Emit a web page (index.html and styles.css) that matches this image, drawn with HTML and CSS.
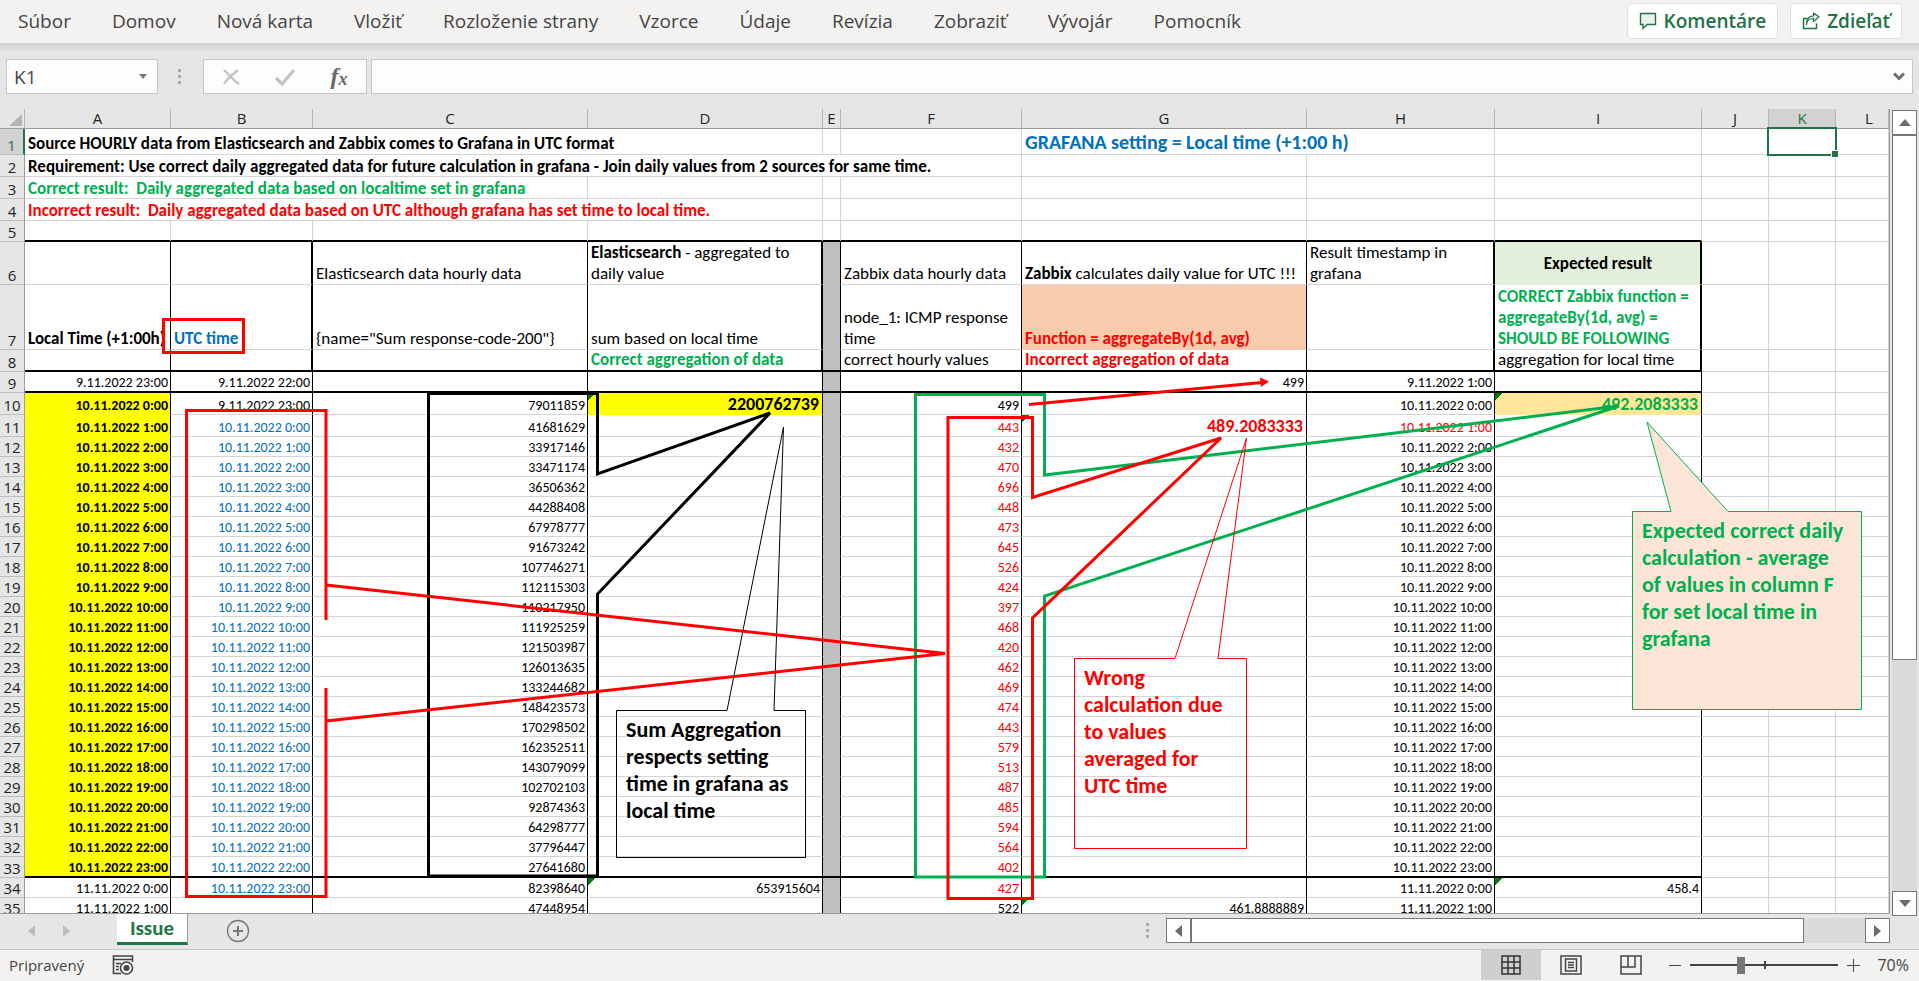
FILE: index.html
```html
<!DOCTYPE html>
<html lang="sk">
<head>
<meta charset="utf-8">
<title>Issue</title>
<link rel="stylesheet" href="styles.css">
</head>
<body>
<div class="app">
<header class="ribbon">
<nav class="tabs">
<button>Súbor</button><button>Domov</button><button>Nová karta</button><button>Vložiť</button><button>Rozloženie strany</button><button>Vzorce</button><button>Údaje</button><button>Revízia</button><button>Zobraziť</button><button>Vývojár</button><button>Pomocník</button>
</nav>
<div class="actions">
<button class="action"><svg width="18" height="18" viewBox="0 0 18 18"><path d="M1.5 1.5h15v11H8l-4 4v-4H1.5z" fill="#e9f3ed" stroke="#217346" stroke-width="1.4"/></svg>Komentáre</button>
<button class="action"><svg width="18" height="18" viewBox="0 0 18 18"><path d="M5.5 6.500H1.500V16.500H14.500V11.500" fill="none" stroke="#217346" stroke-width="1.500"/><path d="M4.500 12.500C5 8.500 7.500 6.500 11.500 6.500V9.500L17 4.800L11.500 1V3.800C7 4 4.500 7.500 4.500 12.500z" fill="#e9f3ed" stroke="#217346" stroke-width="1.200" stroke-linejoin="round"/></svg>Zdieľať</button>
</div>
</header>
<section class="formula">
<div class="namebox"><input type="text" value="K1" aria-label="Pole názvov"><button aria-label="Zoznam názvov"><svg width="8" height="5" viewBox="0 0 8 5"><path d="M0 0h8L4 5z" fill="#777"/></svg></button></div>
<svg class="grip" width="4" height="16" viewBox="0 0 4 16"><path d="M0 0h3v3H0zM0 6h3v3H0zM0 12h3v3H0z" fill="#a9a9a9"/></svg>
<div class="fxgroup">
<button aria-label="Zrušiť"><svg width="18" height="18" viewBox="0 0 18 18"><path d="M2 2C7 7 11 12 17 16M16 2C11 6 5 11 2 16" fill="none" stroke="#c3c3c3" stroke-width="2.400"/></svg></button>
<button aria-label="Zadať"><svg width="20" height="18" viewBox="0 0 20 18"><path d="M1 10L7 16L19 2" fill="none" stroke="#c3c3c3" stroke-width="3.200"/></svg></button>
<button class="fx" aria-label="Vložiť funkciu">f<span>x</span></button>
</div>
<div class="formulabox"><input type="text" aria-label="Riadok vzorcov"><button aria-label="Rozbaliť"><svg width="12" height="9" viewBox="0 0 12 9"><path d="M1 1.500L6 6.500L11 1.500" fill="none" stroke="#6b6b6b" stroke-width="3"/></svg></button></div>
</section>
<main class="work">
<div class="sheet">
<table class="grid">
<colgroup><col class="w-n"><col class="w-a"><col class="w-b"><col class="w-c"><col class="w-d"><col class="w-e"><col class="w-f"><col class="w-g"><col class="w-h"><col class="w-i"><col class="w-j"><col class="w-j"><col></colgroup>
<thead><tr class="cols"><th><svg class="corner" width="13" height="12" viewBox="0 0 13 12"><path d="M13 0v12H0z" fill="#b4b4b4"/></svg></th><th>A</th><th>B</th><th>C</th><th>D</th><th>E</th><th>F</th><th>G</th><th>H</th><th>I</th><th>J</th><th class="on">K</th><th>L</th></tr></thead>
<tbody class="notes">
<tr class="h26"><th class="on">1</th><td colspan="4">Source HOURLY data from Elasticsearch and Zabbix comes to Grafana in UTC format</td><td></td><td></td><td colspan="2" class="blue big">GRAFANA setting = Local time (+1:00 h)</td><td></td><td></td><td></td><td></td></tr>
<tr class="h22"><th>2</th><td colspan="6">Requirement: Use correct daily aggregated data for future calculation in grafana - Join daily values from 2 sources for same time.</td><td></td><td></td><td></td><td></td><td></td><td></td></tr>
<tr class="h22"><th>3</th><td colspan="3" class="green">Correct result:&nbsp; Daily aggregated data based on localtime set in grafana</td><td></td><td></td><td></td><td></td><td></td><td></td><td></td><td></td><td></td></tr>
<tr class="h22"><th>4</th><td colspan="4" class="red">Incorrect result:&nbsp; Daily aggregated data based on UTC although grafana has set time to local time.</td><td></td><td></td><td></td><td></td><td></td><td></td><td></td><td></td></tr>
<tr class="h21 thick"><th>5</th><td></td><td></td><td></td><td></td><td></td><td></td><td></td><td></td><td></td><td></td><td></td><td></td></tr>
</tbody>
<tbody class="body head">
<tr class="h43"><th>6</th><td></td><td></td><td>Elasticsearch data hourly data</td><td><b>Elasticsearch</b> - aggregated to daily value</td><td></td><td>Zabbix data hourly data</td><td class="line"><b>Zabbix</b> calculates daily value for UTC !!!</td><td class="top">Result timestamp in grafana</td><td class="expected">Expected result</td><td></td><td></td><td></td></tr>
<tr class="h65"><th>7</th><td class="line"><b>Local Time (+1:00h)</b></td><td class="blue"><b>UTC time</b></td><td>{name="Sum response-code-200"}</td><td>sum based on local time</td><td></td><td>node_1: ICMP response time</td><td class="red peach"><b>Function = aggregateBy(1d, avg)</b></td><td></td><td class="green line"><b>CORRECT Zabbix function =<br>aggregateBy(1d, avg) =<br>SHOULD BE FOLLOWING</b></td><td></td><td></td><td></td></tr>
<tr class="h22 thick"><th>8</th><td></td><td></td><td></td><td class="green"><b>Correct aggregation of data</b></td><td></td><td>correct hourly values</td><td class="red"><b>Incorrect aggregation of data</b></td><td></td><td class="line">aggregation for local time</td><td></td><td></td><td></td></tr>
</tbody>
<tbody class="body data">
<tr class="h21 thick"><th>9</th><td>9.11.2022 23:00</td><td>9.11.2022 22:00</td><td></td><td></td><td></td><td></td><td>499</td><td>9.11.2022 1:00</td><td></td><td></td><td></td><td></td></tr>
</tbody>
<tbody class="body data day">
<tr class="h22"><th>10</th><td>10.11.2022 0:00</td><td class="black">9.11.2022 23:00</td><td>79011859</td><td class="total yellow flag">2200762739</td><td></td><td class="black">499</td><td></td><td>10.11.2022 0:00</td><td class="total green gold flag">492.2083333</td><td></td><td></td><td></td></tr>
<tr class="h22"><th>11</th><td>10.11.2022 1:00</td><td>10.11.2022 0:00</td><td>41681629</td><td></td><td></td><td>443</td><td class="total red flag">489.2083333</td><td class="red">10.11.2022 1:00</td><td></td><td></td><td></td><td></td></tr>
<tr><th>12</th><td>10.11.2022 2:00</td><td>10.11.2022 1:00</td><td>33917146</td><td></td><td></td><td>432</td><td></td><td>10.11.2022 2:00</td><td></td><td></td><td></td><td></td></tr>
<tr><th>13</th><td>10.11.2022 3:00</td><td>10.11.2022 2:00</td><td>33471174</td><td></td><td></td><td>470</td><td></td><td>10.11.2022 3:00</td><td></td><td></td><td></td><td></td></tr>
<tr><th>14</th><td>10.11.2022 4:00</td><td>10.11.2022 3:00</td><td>36506362</td><td></td><td></td><td>696</td><td></td><td>10.11.2022 4:00</td><td></td><td></td><td></td><td></td></tr>
<tr><th>15</th><td>10.11.2022 5:00</td><td>10.11.2022 4:00</td><td>44288408</td><td></td><td></td><td>448</td><td></td><td>10.11.2022 5:00</td><td></td><td></td><td></td><td></td></tr>
<tr><th>16</th><td>10.11.2022 6:00</td><td>10.11.2022 5:00</td><td>67978777</td><td></td><td></td><td>473</td><td></td><td>10.11.2022 6:00</td><td></td><td></td><td></td><td></td></tr>
<tr><th>17</th><td>10.11.2022 7:00</td><td>10.11.2022 6:00</td><td>91673242</td><td></td><td></td><td>645</td><td></td><td>10.11.2022 7:00</td><td></td><td></td><td></td><td></td></tr>
<tr><th>18</th><td>10.11.2022 8:00</td><td>10.11.2022 7:00</td><td>107746271</td><td></td><td></td><td>526</td><td></td><td>10.11.2022 8:00</td><td></td><td></td><td></td><td></td></tr>
<tr><th>19</th><td>10.11.2022 9:00</td><td>10.11.2022 8:00</td><td>112115303</td><td></td><td></td><td>424</td><td></td><td>10.11.2022 9:00</td><td></td><td></td><td></td><td></td></tr>
<tr><th>20</th><td>10.11.2022 10:00</td><td>10.11.2022 9:00</td><td>110217950</td><td></td><td></td><td>397</td><td></td><td>10.11.2022 10:00</td><td></td><td></td><td></td><td></td></tr>
<tr><th>21</th><td>10.11.2022 11:00</td><td>10.11.2022 10:00</td><td>111925259</td><td></td><td></td><td>468</td><td></td><td>10.11.2022 11:00</td><td></td><td></td><td></td><td></td></tr>
<tr><th>22</th><td>10.11.2022 12:00</td><td>10.11.2022 11:00</td><td>121503987</td><td></td><td></td><td>420</td><td></td><td>10.11.2022 12:00</td><td></td><td></td><td></td><td></td></tr>
<tr><th>23</th><td>10.11.2022 13:00</td><td>10.11.2022 12:00</td><td>126013635</td><td></td><td></td><td>462</td><td></td><td>10.11.2022 13:00</td><td></td><td></td><td></td><td></td></tr>
<tr><th>24</th><td>10.11.2022 14:00</td><td>10.11.2022 13:00</td><td>133244682</td><td></td><td></td><td>469</td><td></td><td>10.11.2022 14:00</td><td></td><td></td><td></td><td></td></tr>
<tr><th>25</th><td>10.11.2022 15:00</td><td>10.11.2022 14:00</td><td>148423573</td><td></td><td></td><td>474</td><td></td><td>10.11.2022 15:00</td><td></td><td></td><td></td><td></td></tr>
<tr><th>26</th><td>10.11.2022 16:00</td><td>10.11.2022 15:00</td><td>170298502</td><td></td><td></td><td>443</td><td></td><td>10.11.2022 16:00</td><td></td><td></td><td></td><td></td></tr>
<tr><th>27</th><td>10.11.2022 17:00</td><td>10.11.2022 16:00</td><td>162352511</td><td></td><td></td><td>579</td><td></td><td>10.11.2022 17:00</td><td></td><td></td><td></td><td></td></tr>
<tr><th>28</th><td>10.11.2022 18:00</td><td>10.11.2022 17:00</td><td>143079099</td><td></td><td></td><td>513</td><td></td><td>10.11.2022 18:00</td><td></td><td></td><td></td><td></td></tr>
<tr><th>29</th><td>10.11.2022 19:00</td><td>10.11.2022 18:00</td><td>102702103</td><td></td><td></td><td>487</td><td></td><td>10.11.2022 19:00</td><td></td><td></td><td></td><td></td></tr>
<tr><th>30</th><td>10.11.2022 20:00</td><td>10.11.2022 19:00</td><td>92874363</td><td></td><td></td><td>485</td><td></td><td>10.11.2022 20:00</td><td></td><td></td><td></td><td></td></tr>
<tr><th>31</th><td>10.11.2022 21:00</td><td>10.11.2022 20:00</td><td>64298777</td><td></td><td></td><td>594</td><td></td><td>10.11.2022 21:00</td><td></td><td></td><td></td><td></td></tr>
<tr><th>32</th><td>10.11.2022 22:00</td><td>10.11.2022 21:00</td><td>37796447</td><td></td><td></td><td>564</td><td></td><td>10.11.2022 22:00</td><td></td><td></td><td></td><td></td></tr>
<tr class="h21 thick"><th>33</th><td>10.11.2022 23:00</td><td>10.11.2022 22:00</td><td>27641680</td><td></td><td></td><td>402</td><td></td><td>10.11.2022 23:00</td><td></td><td></td><td></td><td></td></tr>
</tbody>
<tbody class="body data">
<tr><th>34</th><td>11.11.2022 0:00</td><td class="blue">10.11.2022 23:00</td><td>82398640</td><td class="flag">653915604</td><td></td><td class="red">427</td><td></td><td>11.11.2022 0:00</td><td class="flag">458.4</td><td></td><td></td><td></td></tr>
<tr><th>35</th><td>11.11.2022 1:00</td><td></td><td>47448954</td><td></td><td></td><td>522</td><td class="flag">461.8888889</td><td>11.11.2022 1:00</td><td></td><td></td><td></td><td></td></tr>
</tbody>
</table>
<svg class="shapes" width="1889" height="805" viewBox="0 109 1889 805" fill="none" stroke-width="3">
<path d="M1632.500 511.500H1671L1647 422L1728 511.500H1861.500V709.500H1632.500z" fill="#fbe5d6" stroke="#00b050" stroke-width="1"/>
<path d="M915.500 394.500H1044.500V475L1619 406L1044.500 596V877H915.500z" stroke="#00b050"/>
<path d="M428.500 393.500H597.500V474L770 413L597.500 594V876H428.500z" stroke="#000"/>
<path d="M616.500 710.500H727L783.500 427L774 710.500H805.500V857.500H616.500z" stroke="#000" stroke-width="1"/>
<path d="M1074.500 658.500H1175L1246.500 438L1218 658.500H1246.500V848.500H1074.500z" stroke="#f00" stroke-width="1"/>
<g stroke="#f00"><path d="M163.500 319.500H243.500V352.500H163.500z"/>
<path d="M326 620V410.500H186.500V896.500H326V688M326 585L945 653.500L326 721"/>
<path d="M948 417.500H1032.500V497.500L1221 438L1032.500 618V898.500H948z"/>
<path d="M1029 404.500L1262 382.500"/></g>
<path d="M1260 377.500L1269 381.500L1261 387z" fill="#f00"/>
<path d="M1768 128H1836V155H1768z" stroke="#217346" stroke-width="2"/>
<path d="M1831.500 150.500h7v7h-7z" fill="#217346" stroke="#fff" stroke-width="1"/>
</svg>
<p class="callout sum">Sum Aggregation respects setting time in grafana as local time</p>
<p class="callout wrong">Wrong calculation due to values averaged for UTC time</p>
<p class="callout expect">Expected correct daily calculation - average of values in column F for set local time in grafana</p>
</div>
<div class="vscroll">
<button aria-label="Nahor"><svg width="12" height="7" viewBox="0 0 12 7"><path d="M6 0l6 7H0z" fill="#6b6b6b"/></svg></button>
<div class="track"><div class="thumb"></div></div>
<button aria-label="Nadol"><svg width="12" height="7" viewBox="0 0 12 7"><path d="M6 7L0 0h12z" fill="#6b6b6b"/></svg></button>
</div>
</main>
<section class="sheetbar">
<button class="move" aria-label="Predchádzajúci hárok"><svg width="7" height="12" viewBox="0 0 7 12"><path d="M7 0v12L0 6z" fill="#bdbdbd"/></svg></button>
<button class="move" aria-label="Ďalší hárok"><svg width="7" height="12" viewBox="0 0 7 12"><path d="M0 0v12L7 6z" fill="#bdbdbd"/></svg></button>
<button class="sheettab">Issue</button>
<button class="add" aria-label="Nový hárok"><svg width="24" height="24" viewBox="0 0 24 24"><circle cx="12" cy="12" r="10.500" fill="none" stroke="#777" stroke-width="1.300"/><path d="M12 7v10M7 12h10" stroke="#777" stroke-width="2"/></svg></button>
<svg class="grip end" width="4" height="16" viewBox="0 0 4 16"><path d="M0 0h3v3H0zM0 6h3v3H0zM0 12h3v3H0z" fill="#a9a9a9"/></svg>
<div class="hscroll">
<button aria-label="Doľava"><svg width="7" height="12" viewBox="0 0 7 12"><path d="M7 0v12L0 6z" fill="#6b6b6b"/></svg></button>
<div class="track"><div class="thumb"></div></div>
<button aria-label="Doprava"><svg width="7" height="12" viewBox="0 0 7 12"><path d="M0 0v12L7 6z" fill="#6b6b6b"/></svg></button>
</div>
</section>
<footer class="status">
<span>Pripravený</span>
<svg class="macro" width="22" height="20" viewBox="0 0 22 20"><path d="M9 18.500H1.500V1H20.500V7" fill="none" stroke="#444" stroke-width="1.600"/><path d="M1 4.500H21M4 8.500H9M4 11.500H7M4 14.500H7" stroke="#444" stroke-width="1.600"/><circle cx="14.500" cy="13" r="6" fill="#f3f2f1" stroke="#444" stroke-width="1.600"/><circle cx="14.500" cy="13" r="3" fill="#444"/></svg>
<div class="views">
<button class="on" aria-label="Normálne"><svg width="20" height="20" viewBox="0 0 20 20" fill="none" stroke="#333" stroke-width="1.500"><path d="M1 1h18v18H1zM7 1v18M13 1v18M1 7h18M1 13h18"/></svg></button>
<button aria-label="Rozloženie strany"><svg width="22" height="20" viewBox="0 0 22 20" fill="none" stroke="#444" stroke-width="1.500"><path d="M1 1h20v18H1zM5.500 4h11v12h-11zM8 7.500h6M8 10h6M8 12.500h6"/></svg></button>
<button aria-label="Zlomy strán"><svg width="22" height="20" viewBox="0 0 22 20" fill="none" stroke="#444" stroke-width="1.500"><path d="M1 1h20v18H1zM1 12h14V1M8 1v11"/></svg></button>
</div>
<div class="zoom">
<button aria-label="Oddialiť"><svg width="12" height="12" viewBox="0 0 12 12"><path d="M0 6.500h12" stroke="#444" stroke-width="1"/></svg></button>
<div class="slide"><input type="range" min="0" max="100" value="33" aria-label="Lupa"></div>
<button aria-label="Priblížiť"><svg width="13" height="13" viewBox="0 0 13 13"><path d="M0 6.500h13M6.500 0v13" stroke="#444" stroke-width="1"/></svg></button>
<span class="pct">70%</span>
</div>
</footer>
</div>
</body>
</html>
```
FILE: styles.css
```css
* { box-sizing: border-box; }
body { margin: 0; font-family: "Open Sans", "Noto Sans", sans-serif; color: #444; }
button { border: 0; padding: 0; margin: 0; background: none; font: inherit; color: inherit; display: flex; align-items: center; justify-content: center; }
input { font: inherit; color: inherit; border: 0; padding: 0; margin: 0; background: none; min-width: 0; outline: 0; }
svg { display: block; flex: none; }
.app { height: 100vh; display: flex; flex-direction: column; background: #e6e6e6; overflow: hidden; }

.ribbon { flex: none; height: 43px; padding: 0 17px 2px 18px; display: flex; justify-content: space-between; align-items: center; background: #f3f2f1; font-size: 19px; }
.tabs { display: flex; gap: 41px; white-space: nowrap; }
.actions { display: flex; gap: 12px; }
.action { height: 36px; padding: 0 11px; gap: 7px; background: #fff; border: 1px solid #e1dfdd; border-radius: 4px; color: #217346; font-weight: 600; }

.formula { flex: none; height: 66px; padding: 16px 6px 15px; display: flex; align-items: stretch; background: linear-gradient(#d0d0d0, #e6e6e6 9px); }
.namebox { width: 152px; display: flex; background: #fdfdfd; border: 1px solid #c6c6c6; font-size: 19px; }
.namebox input { flex: 1; padding-left: 7px; }
.namebox button { width: 28px; }
.grip { align-self: center; margin: 0 21px 0 20px; }
.fxgroup { width: 164px; margin-right: 4px; display: flex; background: #fdfdfd; border: 1px solid #c6c6c6; }
.fxgroup button { flex: 1; }
.fx { font: italic bold 24px "Liberation Serif", serif; color: #666; }
.fx span { font-size: 18px; padding-top: 5px; }
.formulabox { flex: 1; display: flex; background: #fdfdfd; border: 1px solid #c6c6c6; }
.formulabox input { flex: 1; padding: 0 8px; }
.formulabox button { width: 26px; }

.work { flex: 1; min-height: 0; display: flex; }
.sheet { flex: 1; min-width: 0; position: relative; overflow: hidden; background: #fff; border-right: 1px solid #9b9b9b; border-bottom: 1px solid #9b9b9b; }
.grid { width: 100%; table-layout: fixed; border-collapse: separate; border-spacing: 0; font-family: Carlito, Lato, sans-serif; font-size: 17px; color: #000; }
.w-n { width: 25px; } .w-a { width: 146px; } .w-b { width: 142px; } .w-c { width: 275px; } .w-d { width: 235px; } .w-e { width: 18px; }
.w-f { width: 181px; } .w-g { width: 285px; } .w-h { width: 188px; } .w-i { width: 207px; } .w-j { width: 67px; }
.grid tr { height: 20px; }
.grid .h21 { height: 21px; } .grid .h22 { height: 22px; } .grid .h26 { height: 26px; } .grid .h43 { height: 43px; } .grid .h65 { height: 65px; }
.grid th { padding: 0; background: #e6e6e6; font: 15px/18px "Open Sans", "Noto Sans", sans-serif; color: #222; border-right: 1px solid #9b9b9b; border-bottom: 1px solid #bdbdbd; vertical-align: bottom; overflow: hidden; }
.grid .cols th { padding-bottom: 1px; border-right-color: #b5b5b5; border-bottom-color: #9b9b9b; }
.grid .cols th:last-child { padding-left: 14px; }
.grid .cols .on { background: #d2d2d2; color: #217346; border-bottom-color: #217346; }
.grid tbody th.on { background: #d2d2d2; color: #217346; border-right: 2px solid #217346; }
.corner { margin: 2px 0 1px 9px; }
.grid td { padding: 0 2px 0 3px; border-right: 1px solid #d4d4d4; border-bottom: 1px solid #d4d4d4; vertical-align: bottom; overflow: hidden; line-height: 19px; }
.notes td { font-weight: bold; white-space: nowrap; }
.grid .h26 td { padding-bottom: 1px; }
.notes .big { font-size: 20px; line-height: 22px; }
.head td { line-height: 21px; }
.head .thick td { line-height: 20px; }
.body td:nth-child(-n+10) { border-right-color: #000; }
.body td:nth-child(6) { background: #bfbfbf; border-bottom-color: #bfbfbf; }
.head td:nth-child(3), .head td:nth-child(5), .head td:nth-child(9), .head td:nth-child(10) { border-right-width: 2px; }
.grid .thick td:nth-child(-n+10) { border-bottom: 2px solid #000; }
.grid .line { white-space: nowrap; }
.grid .top { vertical-align: top; }
.grid .expected { vertical-align: middle; text-align: center; font-weight: bold; background: #e2efda; border-bottom-color: #e2efda; }
.grid .peach { background: #f8cbad; border-bottom-color: #f8cbad; }
.data td { text-align: right; font-size: 14px; line-height: 17px; white-space: nowrap; }
.day td:nth-child(2) { background: #ff0; font-weight: bold; }
.day tr:not(.thick) td:nth-child(2) { border-bottom-color: #ff0; }
.day td:nth-child(3) { color: #0070c0; }
.day td:nth-child(7) { color: #f00; }
.day .black:nth-child(n) { color: #000; }
.grid .total { font-size: 18px; font-weight: bold; line-height: 20px; padding-right: 3px; }
.yellow { background-color: #ff0; } .grid .yellow { border-bottom-color: #ff0; }
.gold { background-color: #ffe699; } .grid .gold { border-bottom-color: #ffe699; }
.flag { background-image: linear-gradient(135deg, #008000 5px, transparent 5px); }
.blue { color: #0070c0; } .green { color: #00b050; } .red { color: #f00; }

.shapes { position: absolute; left: 0; top: 0; }
.callout { position: absolute; margin: 0; font: bold 22px/27px Carlito, Lato, sans-serif; }
.sum { left: 626px; top: 607px; width: 175px; color: #000; }
.wrong { left: 1084px; top: 555px; width: 150px; color: #f00; }
.expect { left: 1642px; top: 408px; width: 206px; color: #00b050; }

.vscroll { width: 29px; margin-bottom: -2px; padding: 1px 2px 0 2px; display: flex; flex-direction: column; }
.vscroll button, .hscroll button { flex: none; width: 25px; height: 25px; background: #fff; border: 1px solid #777; }
.track { flex: 1; background: #dadada; display: flex; }
.thumb { background: #fff; border: 1px solid #777; }
.vscroll .track { flex-direction: column; }
.vscroll .thumb { height: 69.500%; }
.hscroll .thumb { width: 91%; }

.sheetbar { flex: none; height: 35px; padding: 0 0 2px 14px; display: flex; align-items: center; }
.move { width: 35px; }
.sheettab { width: 71px; height: 31px; margin: 0 38px 0 33px; align-self: flex-start; background: #fff; border-bottom: 3px solid #217346; border-right: 1px solid #9b9b9b; color: #217346; font: bold 21px Carlito, Lato, sans-serif; }
.grip.end { margin: 0 16px 0 auto; }
.hscroll { width: 724px; margin-right: 29px; display: flex; }

.status { flex: none; height: 32px; padding: 0 10px 1px 9px; display: flex; align-items: stretch; background: #f3f2f1; border-top: 1px solid #c6c6c6; font-size: 15px; }
.status span { align-self: center; }
.macro { align-self: center; margin-left: 28px; }
.views { margin-left: auto; display: flex; }
.views button { width: 60px; }
.views .on { background: #d0cfcd; }
.zoom { margin-left: 8px; display: flex; align-items: center; }
.slide { position: relative; width: 148px; margin: 0 9px; display: flex; }
.slide::after { content: ""; position: absolute; left: 50%; top: 50%; width: 2px; height: 8px; margin-top: -4px; background: #444; }
.slide input { appearance: none; width: 100%; height: 18px; background: linear-gradient(#444, #444) center / 100% 2px no-repeat; }
.slide input::-webkit-slider-thumb { appearance: none; width: 8px; height: 17px; background: #777; }
.pct { margin-left: 17px; font-size: 16px; }
```
